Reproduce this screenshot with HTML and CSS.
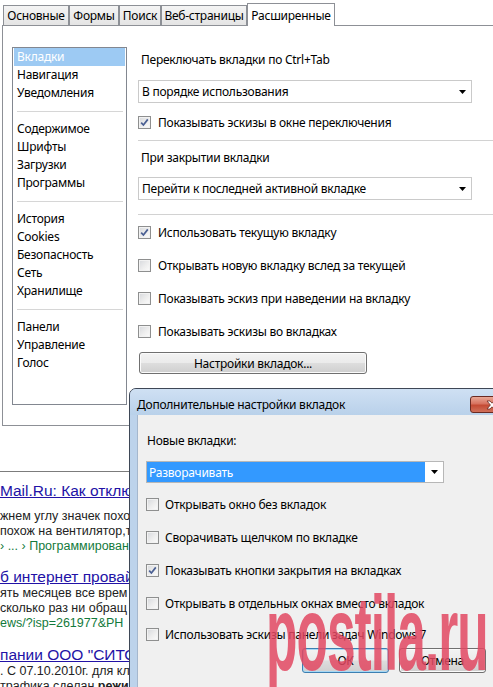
FILE: index.html
```html
<!DOCTYPE html>
<html lang="ru">
<head>
<meta charset="utf-8">
<title>Настройки</title>
<link rel="stylesheet" href="styles.css">
</head>
<body>
<div class="tabs">
  <div class="tab w1">Основные</div>
  <div class="tab w2">Формы</div>
  <div class="tab w3">Поиск</div>
  <div class="tab w4">Веб-страницы</div>
  <div class="tab tab-active w5">Расширенные</div>
</div>
<div class="panel">
  <div class="listbox">
    <div class="li li-sel">Вкладки</div>
    <div class="li">Навигация</div>
    <div class="li">Уведомления</div>
    <div class="li-sep"></div>
    <div class="li">Содержимое</div>
    <div class="li">Шрифты</div>
    <div class="li">Загрузки</div>
    <div class="li">Программы</div>
    <div class="li-sep"></div>
    <div class="li">История</div>
    <div class="li">Cookies</div>
    <div class="li">Безопасность</div>
    <div class="li">Сеть</div>
    <div class="li">Хранилище</div>
    <div class="li-sep"></div>
    <div class="li">Панели</div>
    <div class="li">Управление</div>
    <div class="li">Голос</div>
  </div>
  <div class="content">
    <div class="title">Переключать вкладки по Ctrl+Tab</div>
    <div class="select sel-a"><span>В порядке использования</span><svg class="arrow" width="7" height="4" viewBox="0 0 7 4"><polygon points="0,0 7,0 3.5,4" fill="#000"/></svg></div>
    <div class="check check-a"><span class="cb"><svg width="11" height="11" viewBox="0 0 11 11"><path d="M2.2 5.6 L4.4 8 L8.8 2.4" fill="none" stroke="#4a5f93" stroke-width="1.7"/></svg></span>Показывать эскизы в окне переключения</div>
    <div class="hr hr-a"></div>
    <div class="title title-b">При закрытии вкладки</div>
    <div class="select sel-b"><span>Перейти к последней активной вкладке</span><svg class="arrow" width="7" height="4" viewBox="0 0 7 4"><polygon points="0,0 7,0 3.5,4" fill="#000"/></svg></div>
    <div class="hr hr-b"></div>
    <div class="check check-c"><span class="cb"><svg width="11" height="11" viewBox="0 0 11 11"><path d="M2.2 5.6 L4.4 8 L8.8 2.4" fill="none" stroke="#4a5f93" stroke-width="1.7"/></svg></span>Использовать текущую вкладку</div>
    <div class="check"><span class="cb"></span>Открывать новую вкладку вслед за текущей</div>
    <div class="check"><span class="cb"></span>Показывать эскиз при наведении на вкладку</div>
    <div class="check"><span class="cb"></span>Показывать эскизы во вкладках</div>
    <div class="btn btn-tabs">Настройки вкладок...</div>
  </div>
</div>
<div class="web">
  <div class="wl">Mail.Ru: Как отклю</div>
  <div class="ws ws-1">
    <div>жнем углу значек похо</div>
    <div>похож на вентилятор,т</div>
    <div class="wg">› ... › Программирован</div>
  </div>
  <div class="wl wl-2">б интернет провай</div>
  <div class="ws">
    <div>ять месяцев все врем</div>
    <div>сколько раз ни обращ</div>
    <div class="wg">ews/?isp=261977&amp;PH</div>
  </div>
  <div class="wl wl-3">пании ООО "СИТО</div>
  <div class="ws">
    <div>. С 07.10.2010г. для кл</div>
    <div>трафика сделан <b>режи</b></div>
  </div>
</div>
<div class="dialog">
  <div class="dlg-title">
    <span>Дополнительные настройки вкладок</span>
    <span class="dlg-close"><svg width="14" height="10" viewBox="0 0 14 10"><path d="M2 1h3l2 2.2L9 1h3L8.6 5 12 9H9L7 6.8 5 9H2l3.4-4z" fill="#fff" stroke="#6b2a22" stroke-width="0.8"/></svg></span>
  </div>
  <div class="dlg-frame">
    <div class="dlg-body">
      <div class="dlg-label">Новые вкладки:</div>
      <div class="dsel"><span class="dsel-text">Разворачивать</span><span class="dsel-btn"><svg width="7" height="4" viewBox="0 0 7 4"><polygon points="0,0 7,0 3.5,4" fill="#000"/></svg></span></div>
      <div class="check dcheck dcheck-1"><span class="cb"></span>Открывать окно без вкладок</div>
      <div class="check dcheck"><span class="cb"></span>Сворачивать щелчком по вкладке</div>
      <div class="check dcheck"><span class="cb"><svg width="11" height="11" viewBox="0 0 11 11"><path d="M2.2 5.6 L4.4 8 L8.8 2.4" fill="none" stroke="#4a5f93" stroke-width="1.7"/></svg></span>Показывать кнопки закрытия на вкладках</div>
      <div class="check dcheck"><span class="cb"></span>Открывать в отдельных окнах вместо вкладок</div>
      <div class="check dcheck dcheck-last"><span class="cb"></span>Использовать эскизы панели задач Windows 7</div>
      <div class="btns">
        <div class="btn btn-ok">ОК</div>
        <div class="btn btn-cancel">Отмена</div>
      </div>
    </div>
  </div>
</div>
<div class="watermark">postila.ru</div>
</body>
</html>
```

FILE: styles.css
```css
* { box-sizing: border-box; }
html, body { margin: 0; padding: 0; }
body {
  width: 493px;
  height: 687px;
  overflow: hidden;
  position: relative;
  background: #fff;
  color: #000;
  font-family: "Noto Sans", "Open Sans", sans-serif;
  font-size: 12px;
  letter-spacing: -0.25px;
}

/* tabs */
.tabs {
  display: flex;
  align-items: flex-end;
  height: 25px;
  padding-left: 3px;
}
.tab {
  height: 20px;
  border: 1px solid #8d9096;
  border-bottom: none;
  background: linear-gradient(#f4f4f4, #e4e4e4);
  display: flex;
  align-items: center;
  justify-content: center;
  white-space: nowrap;
}
.tab-active {
  height: 23px;
  margin-bottom: -1px;
  background: #fff;
  position: relative;
  z-index: 1;
}
.w1 { width: 66px; }
.w2 { width: 50px; }
.w3 { width: 42px; }
.w4 { width: 86px; }
.w5 { width: 88px; }

/* main panel */
.panel {
  margin-left: 2px;
  height: 401px;
  border: 1px solid #8d9096;
  border-right: none;
  display: flex;
  padding: 21px 0 0 9px;
}
.listbox {
  flex: none;
  width: 115px;
  height: 358px;
  border: 1px solid #828790;
  padding: 0 1px;
}
.li {
  height: 18px;
  line-height: 18px;
  padding-left: 3px;
  white-space: nowrap;
}
.li-sel {
  background: #9dcaf3;
  color: #fff;
}
.li-sep {
  height: 18px;
  display: flex;
  align-items: center;
  padding: 0 2px 0 3px;
}
.li-sep::after {
  content: "";
  flex: 1;
  height: 1px;
  background: #d6d6d6;
}

.content {
  flex: 1;
  margin-left: 11px;
  display: flex;
  flex-direction: column;
}
.title {
  height: 24px;
  display: flex;
  align-items: center;
  padding-left: 3px;
}
.title-b { margin-top: 4px; }
.select {
  width: 334px;
  height: 23px;
  border: 1px solid #cacaca;
  background: #fff;
  display: flex;
  align-items: center;
  justify-content: space-between;
  padding: 0 5px 0 3px;
}
.sel-a { margin-top: 9px; }
.sel-b { margin-top: 8px; }
.hr { height: 1px; background: #d2d2d2; }
.hr-a { margin-top: 6px; }
.hr-b { margin-top: 14px; }

.check {
  height: 33px;
  display: flex;
  align-items: center;
  gap: 7px;
  white-space: nowrap;
}
.check-a { height: 24px; margin-top: 7px; }
.check-c { margin-top: 1px; }
.cb {
  flex: none;
  width: 13px;
  height: 13px;
  border: 1px solid #8e8f8f;
  background: linear-gradient(135deg, #d6d8dc 0%, #eeeeee 55%, #fcfcfc 100%);
  box-shadow: inset 0 0 0 1px #f2f2f2;
  display: flex;
  align-items: center;
  justify-content: center;
}
.cb svg { display: block; }

.btn {
  height: 22px;
  border: 1px solid #707070;
  border-radius: 3px;
  background: linear-gradient(#f3f3f3 0%, #ebebeb 48%, #dddddd 52%, #cfcfcf 100%);
  box-shadow: inset 0 0 0 1px #fbfbfb;
  display: flex;
  align-items: center;
  justify-content: center;
}
.btn-tabs {
  width: 228px;
  margin-top: 4px;
  margin-left: 1px;
}

/* web page behind */
.web {
  margin-top: 45px;
  width: 130px;
  border-top: 1px solid #7c7c7c;
  padding-top: 9px;
  overflow: hidden;
  white-space: nowrap;
  font-family: "Liberation Sans", Arial, sans-serif;
  font-size: 12.5px;
  line-height: 15px;
  letter-spacing: 0;
  color: #222;
}
.wl {
  font-size: 15.5px;
  line-height: 19px;
  color: #2212a6;
  text-decoration: underline;
}
.wl-2 { margin-top: 13px; }
.wl-3 { margin-top: 14px; }
.ws-1 { margin-top: 9px; }
.wg { color: #137a3c; }

/* dialog */
.dialog {
  position: absolute;
  left: 129px;
  top: 388px;
  width: 400px;
  height: 310px;
  border: 1px solid #3e4756;
  border-radius: 7px 7px 0 0;
  background: #bdd3eb;
  overflow: hidden;
}
.dlg-title {
  position: relative;
  height: 26px;
  padding: 5px 0 0 7px;
  display: flex;
  align-items: center;
  background: linear-gradient(#cfe0f3, #b9d1ea);
  white-space: nowrap;
}
.dlg-close {
  position: absolute;
  left: 340px;
  top: 7px;
  width: 43px;
  height: 17px;
  border: 1px solid #6a2a22;
  border-radius: 3px;
  background: linear-gradient(#e9a896 0%, #d7725f 45%, #c44a33 55%, #d0705a 100%);
  display: flex;
  align-items: center;
  justify-content: center;
}
.dlg-close svg { display: block; }
.dlg-frame {
  padding-left: 7px;
  height: 300px;
}
.dlg-body {
  height: 100%;
  background: #f0f0f0;
  border-left: 1px solid #a5b7cd;
  padding: 13px 0 0 8px;
}
.dlg-label {
  height: 24px;
  display: flex;
  align-items: center;
  padding-left: 1px;
}
.dsel {
  margin-top: 9px;
  width: 298px;
  height: 22px;
  border: 1px solid #b7b7b7;
  background: #fff;
  display: flex;
}
.dsel-text {
  width: 278px;
  background: #3399ff;
  color: #fff;
  display: flex;
  align-items: center;
  padding-left: 2px;
}
.dsel-btn {
  flex: 1;
  display: flex;
  align-items: center;
  justify-content: center;
}
.dsel-btn svg { display: block; }
.dcheck { gap: 6px; }
.dcheck-1 { margin-top: 5px; }
.dcheck-last { height: 28px; }
.btns {
  display: flex;
  gap: 10px;
  padding-left: 156px;
}
.btn-ok, .btn-cancel {
  width: 87px;
  height: 25px;
}
.btn-ok {
  border-color: #3c7fb1;
  box-shadow: inset 0 0 0 1px #a6d8f5;
}

/* watermark overlay */
.watermark {
  position: absolute;
  left: 266px;
  top: 581px;
  font-family: "Liberation Sans", Arial, sans-serif;
  font-weight: bold;
  font-size: 105px;
  line-height: 1;
  letter-spacing: -2px;
  color: rgba(226, 72, 98, 0.85);
  transform: scaleX(0.49);
  transform-origin: left top;
  white-space: nowrap;
}
```
